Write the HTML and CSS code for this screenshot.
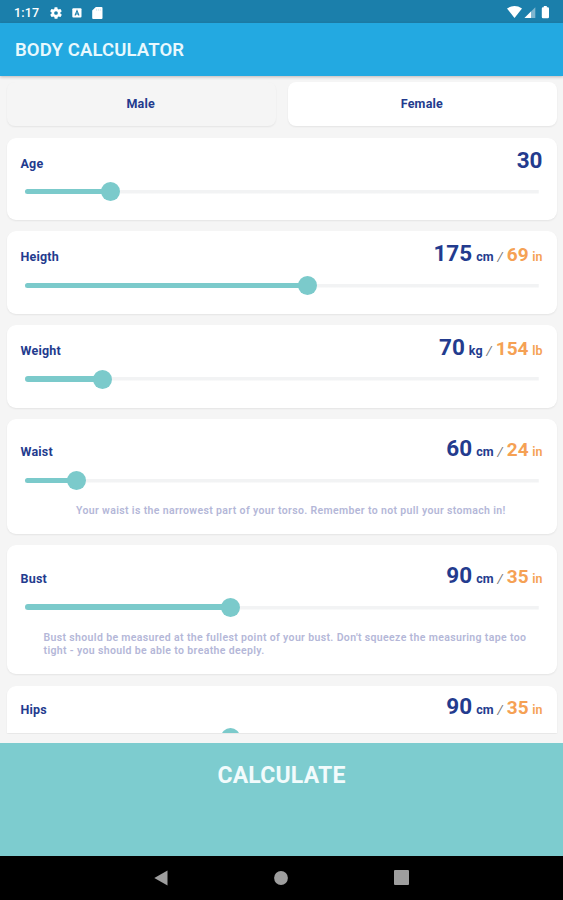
FILE: index.html
```html
<!DOCTYPE html>
<html lang="en">
<head>
    <meta charset="UTF-8">
    <meta name="viewport" content="width=device-width, initial-scale=1.0">
    <title>Body Calculator</title>
    <link rel="stylesheet" href="styles.css">
</head>
<body>
    <div class="status-bar">
        <span class="time">1:17</span>
        <svg class="gear" width="14" height="14" viewBox="0 0 24 24"><path fill="#fff" fill-rule="evenodd" d="M19.4 13a7.500 7.500 0 0 0 0-2l2.100-1.650a.5.5 0 0 0 .12-.64l-2-3.460a.5.5 0 0 0-.6-.22l-2.500 1a7.300 7.300 0 0 0-1.700-.98l-.38-2.650a.5.5 0 0 0-.5-.4h-4a.5.5 0 0 0-.5.4l-.38 2.650a7.700 7.700 0 0 0-1.700.98l-2.500-1a.5.5 0 0 0-.6.22l-2 3.460a.5.5 0 0 0 .12.640L4.600 11a7.900 7.900 0 0 0 0 2l-2.100 1.650a.5.5 0 0 0-.12.640l2 3.460c.12.220.39.300.6.220l2.500-1c.52.4 1.080.73 1.700.98l.38 2.650c.03.240.24.4.5.4h4c.25 0 .46-.16.5-.4l.38-2.650a7.300 7.300 0 0 0 1.700-.98l2.500 1c.22.080.48 0 .6-.22l2-3.460a.5.5 0 0 0-.12-.64zM12 15.200a3.200 3.200 0 1 1 0-6.400 3.200 3.200 0 0 1 0 6.400z"/></svg>
        <svg class="app" width="10" height="10" viewBox="0 0 10 10"><rect x="0.300" y="0.300" width="9.200" height="9.200" rx="1" fill="#fff"/><path d="M3 7.500 5 2.600 7 7.500M3.700 6h2.600" fill="none" stroke="#1b7fab" stroke-width="1.100"/></svg>
        <svg class="sd" width="11" height="12" viewBox="0 0 11 12"><path fill="#fff" d="M3.800 0H9.500Q10.500 0 10.500 1V11Q10.500 12 9.500 12H1.200Q.2 12 .2 11V3.500z"/><path d="M4.500 1.800v2M6.400 1.800v2M8.300 1.800v2" stroke="#b9dbe9" stroke-width=".6"/></svg>
        <svg class="signals" width="44" height="13" viewBox="0 0 44 13">
            <path fill="#fff" d="M0 2.400Q7.500-2.200 15 2.400L7.500 12z"/>
            <path fill="#7fb6cf" d="M17.500 12 28.300 1.200V12z"/>
            <path fill="#fff" d="M17.500 12 24 5.500V12z"/>
            <path fill="#fff" d="M36.800 1.200V0h3v1.200h1Q42 1.200 42 2.400V11Q42 12.200 40.800 12.200H36Q34.800 12.200 34.800 11V2.400Q34.800 1.200 36 1.200z"/>
        </svg>
    </div>
    <div class="header">
        <h1>BODY CALCULATOR</h1>
    </div>

    <div class="content">
        <div class="gender">
            <button class="active">Male</button>
            <button>Female</button>
        </div>

        <div class="card">
            <div class="row">
                <span class="label">Age</span>
                <span class="value">30</span>
            </div>
            <div class="slider" style="--pos: 16.600%"><div class="fill"></div><div class="thumb"></div></div>
        </div>

        <div class="card">
            <div class="row">
                <span class="label">Heigth</span>
                <span class="value">175 <small>cm</small> <i>/</i> <b>69 <small>in</small></b></span>
            </div>
            <div class="slider" style="--pos: 55%"><div class="fill"></div><div class="thumb"></div></div>
        </div>

        <div class="card">
            <div class="row">
                <span class="label">Weight</span>
                <span class="value">70 <small>kg</small> <i>/</i> <b>154 <small>lb</small></b></span>
            </div>
            <div class="slider" style="--pos: 15%"><div class="fill"></div><div class="thumb"></div></div>
        </div>

        <div class="card waist">
            <div class="row">
                <span class="label">Waist</span>
                <span class="value">60 <small>cm</small> <i>/</i> <b>24 <small>in</small></b></span>
            </div>
            <div class="slider" style="--pos: 10%"><div class="fill"></div><div class="thumb"></div></div>
            <p class="hint">Your waist is the narrowest part of your torso. Remember to not pull your stomach in!</p>
        </div>

        <div class="card bust">
            <div class="row">
                <span class="label">Bust</span>
                <span class="value">90 <small>cm</small> <i>/</i> <b>35 <small>in</small></b></span>
            </div>
            <div class="slider" style="--pos: 40%"><div class="fill"></div><div class="thumb"></div></div>
            <p class="hint">Bust should be measured at the fullest point of your bust. Don't squeeze the measuring tape too<br>tight - you should be able to breathe deeply.</p>
        </div>

        <div class="card hips">
            <div class="row">
                <span class="label">Hips</span>
                <span class="value">90 <small>cm</small> <i>/</i> <b>35 <small>in</small></b></span>
            </div>
            <div class="slider" style="--pos: 40%"><div class="fill"></div><div class="thumb"></div></div>
        </div>
    </div>

    <button class="calculate">CALCULATE</button>

    <div class="nav-bar">
        <svg width="14" height="16" viewBox="0 0 14 16"><path fill="#9e9e9e" d="M13.500.5v15L.3 8z"/></svg>
        <svg width="14" height="14" viewBox="0 0 14 14"><circle cx="7" cy="7" r="6.900" fill="#9e9e9e"/></svg>
        <svg width="15" height="15" viewBox="0 0 15 15"><rect width="15" height="15" rx="1" fill="#9e9e9e"/></svg>
    </div>
</body>
</html>
```
FILE: styles.css
```css
* {
    box-sizing: border-box;
}
body {
    margin: 0;
    height: 900px;
    display: flex;
    flex-direction: column;
    overflow: hidden;
    font-family: Roboto, sans-serif;
    font-weight: 500;
    background: #f5f5f5;
    color: #233b8e;
}
button {
    border: 0;
    padding: 0;
    font: inherit;
    color: inherit;
}
.status-bar {
    display: flex;
    align-items: center;
    flex: none;
    height: 23px;
    padding: 2px 12px 0 14px;
    background: #1b7fab;
    color: #fff;
}
.time {
    width: 35px;
    font-size: 12.5px;
    letter-spacing: 0.2px;
}
.app {
    margin: 0 10px 0 9px;
}
.signals {
    margin-left: auto;
}
.header {
    display: flex;
    align-items: center;
    flex: none;
    height: 52.5px;
    padding: 1px 0 0 15px;
    background: #23a9e1;
    color: #e8f8fd;
    box-shadow: 0 1px 3px rgba(60, 40, 40, 0.3);
}
.header h1 {
    margin: 0;
    font-size: 18.5px;
    font-weight: 600;
    letter-spacing: 0.13px;
}
.content {
    display: flex;
    flex-direction: column;
    gap: 11.3px;
    flex: none;
    height: 658px;
    padding: 6px 6px 0 6.5px;
    overflow: hidden;
}
.gender {
    display: flex;
    flex: none;
    gap: 12px;
    height: 44.8px;
}
.gender button {
    flex: 1;
    padding-right: 1px;
    border-radius: 8px;
    background: #fff;
    font-size: 12.5px;
    font-weight: 700;
    letter-spacing: 0.2px;
    box-shadow: 0 1px 2px rgba(0, 0, 0, 0.07);
}
.gender .active {
    background: #f5f5f5;
}
.card {
    flex: none;
    height: 82.5px;
    padding: 10px 14px 0;
    border-radius: 9px;
    background: #fff;
    box-shadow: 0 1px 2px rgba(0, 0, 0, 0.07);
}
.row {
    display: flex;
    justify-content: space-between;
    height: 34.500px;
    padding-right: 0.5px;
    line-height: 26px;
}
.label {
    padding-top: 3px;
    font-size: 12.5px;
    font-weight: 700;
    letter-spacing: 0.2px;
}
.value {
    margin-top: -1px;
    font-size: 22.5px;
    font-weight: 700;
    word-spacing: -1.6px;
}
.value small {
    font-size: 12.5px;
}
.value i {
    color: #777;
    font-size: 13px;
    font-weight: 400;
}
.value b {
    color: #f5a154;
    font-size: 19px;
    font-weight: 700;
    word-spacing: -1px;
}
.value b small {
    font-size: 12.5px;
    font-weight: 600;
}
.slider {
    position: relative;
    height: 19px;
    margin: 0 4.500px;
    background: linear-gradient(#f2f3f4, #f2f3f4) center / 100% 3.500px no-repeat;
}
.fill {
    position: absolute;
    top: 6.700px;
    left: 0;
    width: var(--pos);
    height: 5.600px;
    border-radius: 3px;
    background: #7bcacb;
}
.thumb {
    position: absolute;
    top: 0;
    left: calc(var(--pos) - 9.500px);
    width: 19px;
    height: 19px;
    border-radius: 50%;
    background: #7bcacb;
}
.waist {
    height: 115px;
    padding-top: 17.500px;
}
.bust {
    height: 129px;
    padding-top: 18px;
}
.hips {
    height: 47.5px;
    padding-top: 8px;
    border-radius: 9px 9px 0 0;
    overflow: hidden;
}
.hint {
    margin: 14px 0 0 23px;
    color: #b4b7d8;
    font-size: 10.500px;
    font-weight: 600;
    letter-spacing: 0.355px;
    line-height: 13px;
    white-space: nowrap;
}
.waist .hint {
    margin-left: 55.5px;
}
.calculate {
    flex: none;
    margin-top: 9px;
    height: 113px;
    padding-bottom: 47px;
    background: #7dcccf;
    color: #f2fbfc;
    font-size: 23px;
    font-weight: 700;
    letter-spacing: 0.2px;
}
.nav-bar {
    display: flex;
    align-items: center;
    justify-content: space-between;
    flex: 1;
    padding: 0 154px 0 153.500px;
    background: #000;
}
```
